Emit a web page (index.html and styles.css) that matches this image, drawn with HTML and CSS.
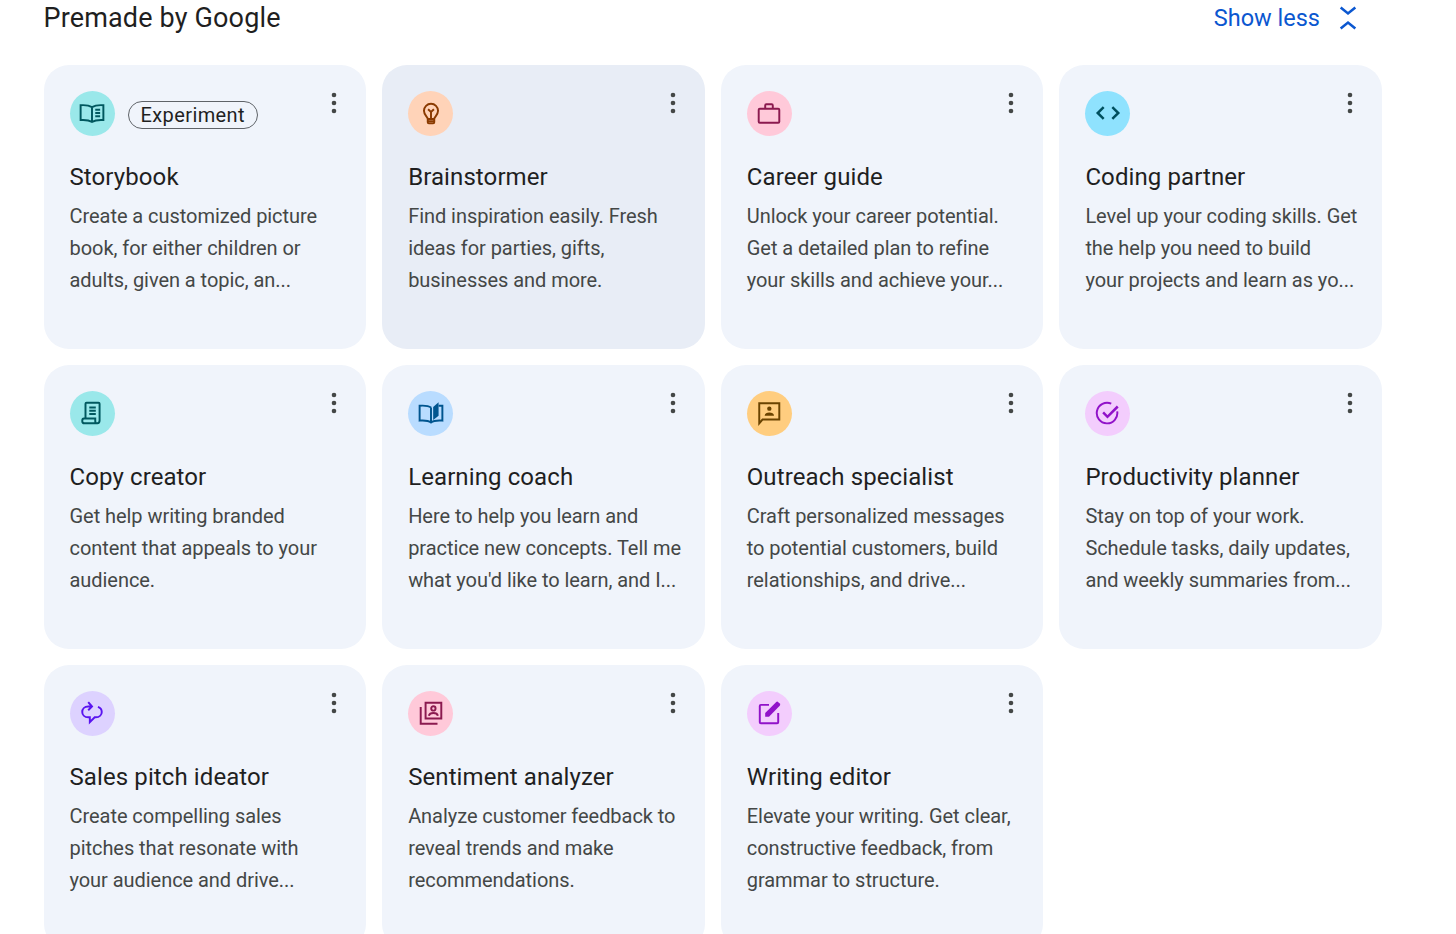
FILE: index.html
```html
<!DOCTYPE html>
<html lang="en">
<head>
    <meta charset="UTF-8">
    <meta name="viewport" content="width=device-width, initial-scale=1.0">
    <title>Premade by Google</title>
    <link rel="stylesheet" href="styles.css">
</head>
<body>
    <div class="page">
        <div class="section-head">
            <h1>Premade by Google</h1>
            <div class="show-less">
                <span>Show less</span>
                <svg class="chevrons" viewBox="0 0 24 28"><path d="M4 2.500 12 9 20 2.500M4 25.500 12 19 20 25.500"/></svg>
            </div>
        </div>

        <div class="gem-grid">
            <!-- Row 1 -->
            <div class="gem-card">
                <div class="card-top">
                    <div class="gem-icon teal">
                        <svg viewBox="0 0 24 24"><path d="M12 6.500C9.500 5 6 4.500 1.500 4.800V18.500c4.500-.3 8 .2 10.500 1.700 2.500-1.500 6-2 10.500-1.700V4.800C18 4.500 14.500 5 12 6.500ZM12 6.500v13.700M15 9h4.500M15 12h4.500M15 15h4.500"/></svg>
                    </div>
                    <span class="badge">Experiment</span>
                    <svg class="menu" viewBox="0 0 6 22"><circle cx="3" cy="3" r="2.300"/><circle cx="3" cy="11" r="2.300"/><circle cx="3" cy="19" r="2.300"/></svg>
                </div>
                <h2>Storybook</h2>
                <p>Create a customized picture book, for either children or adults, given a topic, an...</p>
            </div>

            <div class="gem-card active">
                <div class="card-top">
                    <div class="gem-icon orange">
                        <svg viewBox="0 0 24 24"><path d="M9 17.500c0-2-3.500-3.500-3.500-7.500a6.500 6.500 0 0 1 13 0c0 4-3.500 5.500-3.500 7.500ZM9 17.500V20.500c0 .6.400 1 1 1h4c.6 0 1-.4 1-1v-3M9.200 19.500h5.600M12 17.500V11M9.300 8.500 12 11l2.700-2.500"/></svg>
                    </div>
                    <svg class="menu" viewBox="0 0 6 22"><circle cx="3" cy="3" r="2.300"/><circle cx="3" cy="11" r="2.300"/><circle cx="3" cy="19" r="2.300"/></svg>
                </div>
                <h2>Brainstormer</h2>
                <p>Find inspiration easily. Fresh ideas for parties, gifts, businesses and more.</p>
            </div>

            <div class="gem-card">
                <div class="card-top">
                    <div class="gem-icon pink">
                        <svg viewBox="0 0 24 24"><path d="M3.500 8h17c.6 0 1 .4 1 1v11c0 .6-.4 1-1 1h-17c-.6 0-1-.4-1-1V9c0-.6.400-1 1-1ZM8.500 8V5c0-.6.400-1 1-1h5c.6 0 1 .4 1 1v3"/></svg>
                    </div>
                    <svg class="menu" viewBox="0 0 6 22"><circle cx="3" cy="3" r="2.300"/><circle cx="3" cy="11" r="2.300"/><circle cx="3" cy="19" r="2.300"/></svg>
                </div>
                <h2>Career guide</h2>
                <p>Unlock your career potential. Get a detailed plan to refine your skills and achieve your...</p>
            </div>

            <div class="gem-card">
                <div class="card-top">
                    <div class="gem-icon sky">
                        <svg viewBox="0 0 24 24"><path class="thick" d="M8 6.500 2.500 12 8 17.500M16 6.500 21.500 12 16 17.500"/></svg>
                    </div>
                    <svg class="menu" viewBox="0 0 6 22"><circle cx="3" cy="3" r="2.300"/><circle cx="3" cy="11" r="2.300"/><circle cx="3" cy="19" r="2.300"/></svg>
                </div>
                <h2>Coding partner</h2>
                <p>Level up your coding skills. Get the help you need to build<br>your projects and learn as yo...</p>
            </div>

            <!-- Row 2 -->
            <div class="gem-card">
                <div class="card-top">
                    <div class="gem-icon teal">
                        <svg viewBox="0 0 24 24"><path d="M6 17V3.500c0-.6.400-1 1-1h11c.6 0 1 .4 1 1V19M4.500 17H15v2.500c0 1 .8 2 2 2H5c-1.200 0-2-1-2-2.200C3 18 3.500 17 4.500 17ZM19 19c0 1.500-.8 2.500-2 2.500M9.500 7h6M9.500 10h6M9.500 13h6"/></svg>
                    </div>
                    <svg class="menu" viewBox="0 0 6 22"><circle cx="3" cy="3" r="2.300"/><circle cx="3" cy="11" r="2.300"/><circle cx="3" cy="19" r="2.300"/></svg>
                </div>
                <h2>Copy creator</h2>
                <p>Get help writing branded content that appeals to your audience.</p>
            </div>

            <div class="gem-card">
                <div class="card-top">
                    <div class="gem-icon blue">
                        <svg viewBox="0 0 24 24"><path d="M12 7C10 5.500 5.500 5 1.500 5.300V19c4-.3 8.500.2 10.500 1.700 2-1.500 6.500-2 10.500-1.700V5.300h-3.500M12 7v13.700"/><path class="fill" d="M14 6.500 19 2V14.500L14 18.500Z"/></svg>
                    </div>
                    <svg class="menu" viewBox="0 0 6 22"><circle cx="3" cy="3" r="2.300"/><circle cx="3" cy="11" r="2.300"/><circle cx="3" cy="19" r="2.300"/></svg>
                </div>
                <h2>Learning coach</h2>
                <p>Here to help you learn and practice new concepts. Tell me what you'd like to learn, and I...</p>
            </div>

            <div class="gem-card">
                <div class="card-top">
                    <div class="gem-icon amber">
                        <svg viewBox="0 0 24 24"><path d="M3 3h18.500v15H6l-3 3.500Z"/><circle class="fill" cx="12.300" cy="8" r="2"/><path class="fill" d="M8 14.500c0-2 2-3 4.300-3s4.300 1 4.300 3Z"/></svg>
                    </div>
                    <svg class="menu" viewBox="0 0 6 22"><circle cx="3" cy="3" r="2.300"/><circle cx="3" cy="11" r="2.300"/><circle cx="3" cy="19" r="2.300"/></svg>
                </div>
                <h2>Outreach specialist</h2>
                <p>Craft personalized messages to potential customers, build relationships, and drive...</p>
            </div>

            <div class="gem-card">
                <div class="card-top">
                    <div class="gem-icon violet">
                        <svg viewBox="0 0 24 24"><path d="M20.500 10.500A9.500 9.500 0 1 1 15 3.400"/><path class="thick" d="M7.500 11.500 11.500 15.500 21 6"/></svg>
                    </div>
                    <svg class="menu" viewBox="0 0 6 22"><circle cx="3" cy="3" r="2.300"/><circle cx="3" cy="11" r="2.300"/><circle cx="3" cy="19" r="2.300"/></svg>
                </div>
                <h2>Productivity planner</h2>
                <p>Stay on top of your work. Schedule tasks, daily updates, and weekly summaries from...</p>
            </div>

            <!-- Row 3 -->
            <div class="gem-card">
                <div class="card-top">
                    <div class="gem-icon indigo">
                        <svg viewBox="0 0 24 24"><path d="M12 6H8.500C5 6 3 8.500 3 11s2 5 5.500 5H10v4.500l4.500-4.500h1C19 16 21 13.500 21 11c0-2.200-1.500-4-3.500-4.700M8.500 2 12 6 8.500 9.500"/></svg>
                    </div>
                    <svg class="menu" viewBox="0 0 6 22"><circle cx="3" cy="3" r="2.300"/><circle cx="3" cy="11" r="2.300"/><circle cx="3" cy="19" r="2.300"/></svg>
                </div>
                <h2>Sales pitch ideator</h2>
                <p>Create compelling sales pitches that resonate with<br>your audience and drive...</p>
            </div>

            <div class="gem-card">
                <div class="card-top">
                    <div class="gem-icon pink">
                        <svg viewBox="0 0 24 24"><path d="M7 2.500h14.500V17H7ZM2.500 6.500v15.500H18"/><circle cx="14.200" cy="7.800" r="2"/><path d="M10 14.500c.5-1.800 2.200-2.500 4.200-2.500s3.700.7 4.200 2.500"/></svg>
                    </div>
                    <svg class="menu" viewBox="0 0 6 22"><circle cx="3" cy="3" r="2.300"/><circle cx="3" cy="11" r="2.300"/><circle cx="3" cy="19" r="2.300"/></svg>
                </div>
                <h2>Sentiment analyzer</h2>
                <p>Analyze customer feedback to reveal trends and make recommendations.</p>
            </div>

            <div class="gem-card">
                <div class="card-top">
                    <div class="gem-icon violet">
                        <svg viewBox="0 0 24 24"><path d="M12 4.500H4.500c-.6 0-1 .4-1 1v15c0 .6.400 1 1 1h15c.6 0 1-.4 1-1V12"/><path class="fill" d="M8.500 12 18.500 2a1.500 1.500 0 0 1 2.100 0l1.300 1.300a1.500 1.500 0 0 1 0 2.100L12 15.500H8.500Z"/></svg>
                    </div>
                    <svg class="menu" viewBox="0 0 6 22"><circle cx="3" cy="3" r="2.300"/><circle cx="3" cy="11" r="2.300"/><circle cx="3" cy="19" r="2.300"/></svg>
                </div>
                <h2>Writing editor</h2>
                <p>Elevate your writing. Get clear, constructive feedback, from grammar to structure.</p>
            </div>
        </div>
    </div>
</body>
</html>
```

FILE: styles.css
```css
body {
    margin: 0;
    background: #fff;
    font-family: Roboto, "Liberation Sans", sans-serif;
    color: #1f1f1f;
    overflow: hidden;
}

.page {
    width: 1338.500px;
    margin-left: 43.500px;
}

.section-head {
    display: flex;
    justify-content: space-between;
    align-items: center;
    height: 36px;
    margin-bottom: 29px;
}

h1 {
    margin: 0;
    font-size: 27px;
    font-weight: 400;
    letter-spacing: 0.15px;
}

.show-less {
    display: flex;
    align-items: center;
    gap: 17px;
    padding-right: 23px;
    color: #0b57d0;
    font-size: 23.500px;
}

.chevrons {
    width: 22px;
    height: 26px;
    fill: none;
    stroke: #0b57d0;
    stroke-width: 2.800;
}

.gem-grid {
    display: grid;
    grid-template-columns: repeat(4, 1fr);
    grid-auto-rows: 283.500px;
    gap: 16.500px 16px;
}

.gem-card {
    padding: 25.500px 26px;
    box-sizing: border-box;
    background: #f0f4fb;
    border-radius: 25px;
}

.gem-card.active {
    background: #e8edf6;
}

.card-top {
    position: relative;
    display: flex;
    align-items: center;
    gap: 13px;
    height: 45px;
}

.gem-icon {
    display: flex;
    align-items: center;
    justify-content: center;
    width: 45px;
    height: 45px;
    flex-shrink: 0;
    border-radius: 50%;
}

.gem-icon svg {
    width: 26px;
    height: 26px;
    fill: none;
    stroke: currentColor;
    stroke-width: 1.800;
}

.gem-icon .thick {
    stroke-width: 2.300;
}

.gem-icon .fill {
    fill: currentColor;
    stroke: none;
}

.teal { background: #9ae8ea; color: #00585f; }
.orange { background: #ffd3b8; color: #8a3a00; }
.pink { background: #ffc9d9; color: #8b1a4f; }
.sky { background: #8fe2fe; color: #004f5e; }
.blue { background: #b9dcff; color: #00558f; }
.amber { background: #ffcd7f; color: #6a4300; }
.violet { background: #f3cdfd; color: #9112c9; }
.indigo { background: #ddd2ff; color: #5a14f0; }

.badge {
    margin-top: 3px;
    padding: 0 12px;
    border: 1.500px solid #5f6368;
    border-radius: 15px;
    font-size: 20px;
    line-height: 26px;
    letter-spacing: 0.4px;
    color: #1f1f1f;
}

/* three dots menu in the corner of each card */
.menu {
    position: absolute;
    top: 1.500px;
    right: 3px;
    width: 6px;
    height: 22px;
    fill: #444746;
}

h2 {
    margin: 25.500px 0 0;
    font-size: 24px;
    line-height: 32px;
    font-weight: 400;
    letter-spacing: 0.1px;
}

p {
    margin: 7px -6px 0 0;
    font-size: 20px;
    line-height: 32px;
    letter-spacing: -0.05px;
    color: #444746;
}
```
